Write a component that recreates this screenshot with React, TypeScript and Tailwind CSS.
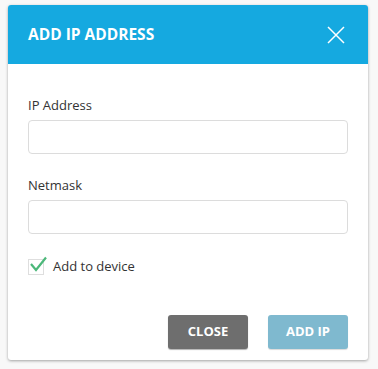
import React from 'react';

const font = { fontFamily: '"Open Sans", "Noto Sans", sans-serif' };

function CloseIcon() {
  return (
    <svg width="18" height="18" viewBox="0 0 18 18" fill="none" stroke="white" strokeWidth="1.5">
      <path d="M1 1L17 17M17 1L1 17" />
    </svg>
  );
}

export default function App() {
  return (
    <div className="w-[378px] h-[369px] bg-[#f8f8f8] pt-[5px] pl-[8px]" style={font}>
      <div className="w-[360px] h-[355px] bg-white rounded-[3px] shadow-[0_1px_3px_rgba(0,0,0,0.35)] flex flex-col overflow-hidden">
        <div className="h-[59px] bg-[#15a9e0] flex items-center justify-between pl-5 pr-[23px]">
          <h2 className="text-white text-[15.5px] font-bold">ADD IP ADDRESS</h2>
          <button className="flex items-center justify-center">
            <CloseIcon />
          </button>
        </div>
        <div className="flex-1 flex flex-col px-5 pt-[32px]">
          <label className="text-[13px] leading-[18px] text-[#333]">IP Address</label>
          <input className="mt-[6px] h-[34px] w-full border border-[#dcdcdc] rounded-[4px] outline-none px-2 text-[13px]" />
          <label className="mt-[22px] text-[13px] leading-[18px] text-[#333]">Netmask</label>
          <input className="mt-[6px] h-[34px] w-full border border-[#dcdcdc] rounded-[4px] outline-none px-2 text-[13px]" />
          <div className="mt-[23px] flex items-center gap-[9px]">
            <span className="relative w-[16px] h-[16px] border border-[#dedede] bg-white">
              <svg className="absolute left-0 -top-[4px]" width="19" height="16" viewBox="0 0 19 16" fill="none" stroke="#4cb87a" strokeWidth="2.2">
                <path d="M2 8L7 14L17 1.5" />
              </svg>
            </span>
            <span className="text-[13px] text-[#333]">Add to device</span>
          </div>
          <div className="mt-auto mb-[11px] flex justify-end gap-5">
            <button className="w-[80px] h-[34px] rounded-[3px] bg-[#6e6e6e] text-white text-[13px] font-bold shadow-[0_1px_1px_rgba(0,0,0,0.3)]">CLOSE</button>
            <button className="w-[80px] h-[34px] rounded-[3px] bg-[#7fb9cf] text-white text-[13px] font-bold shadow-[0_1px_1px_rgba(0,0,0,0.15)]">ADD IP</button>
          </div>
        </div>
      </div>
    </div>
  );
}
